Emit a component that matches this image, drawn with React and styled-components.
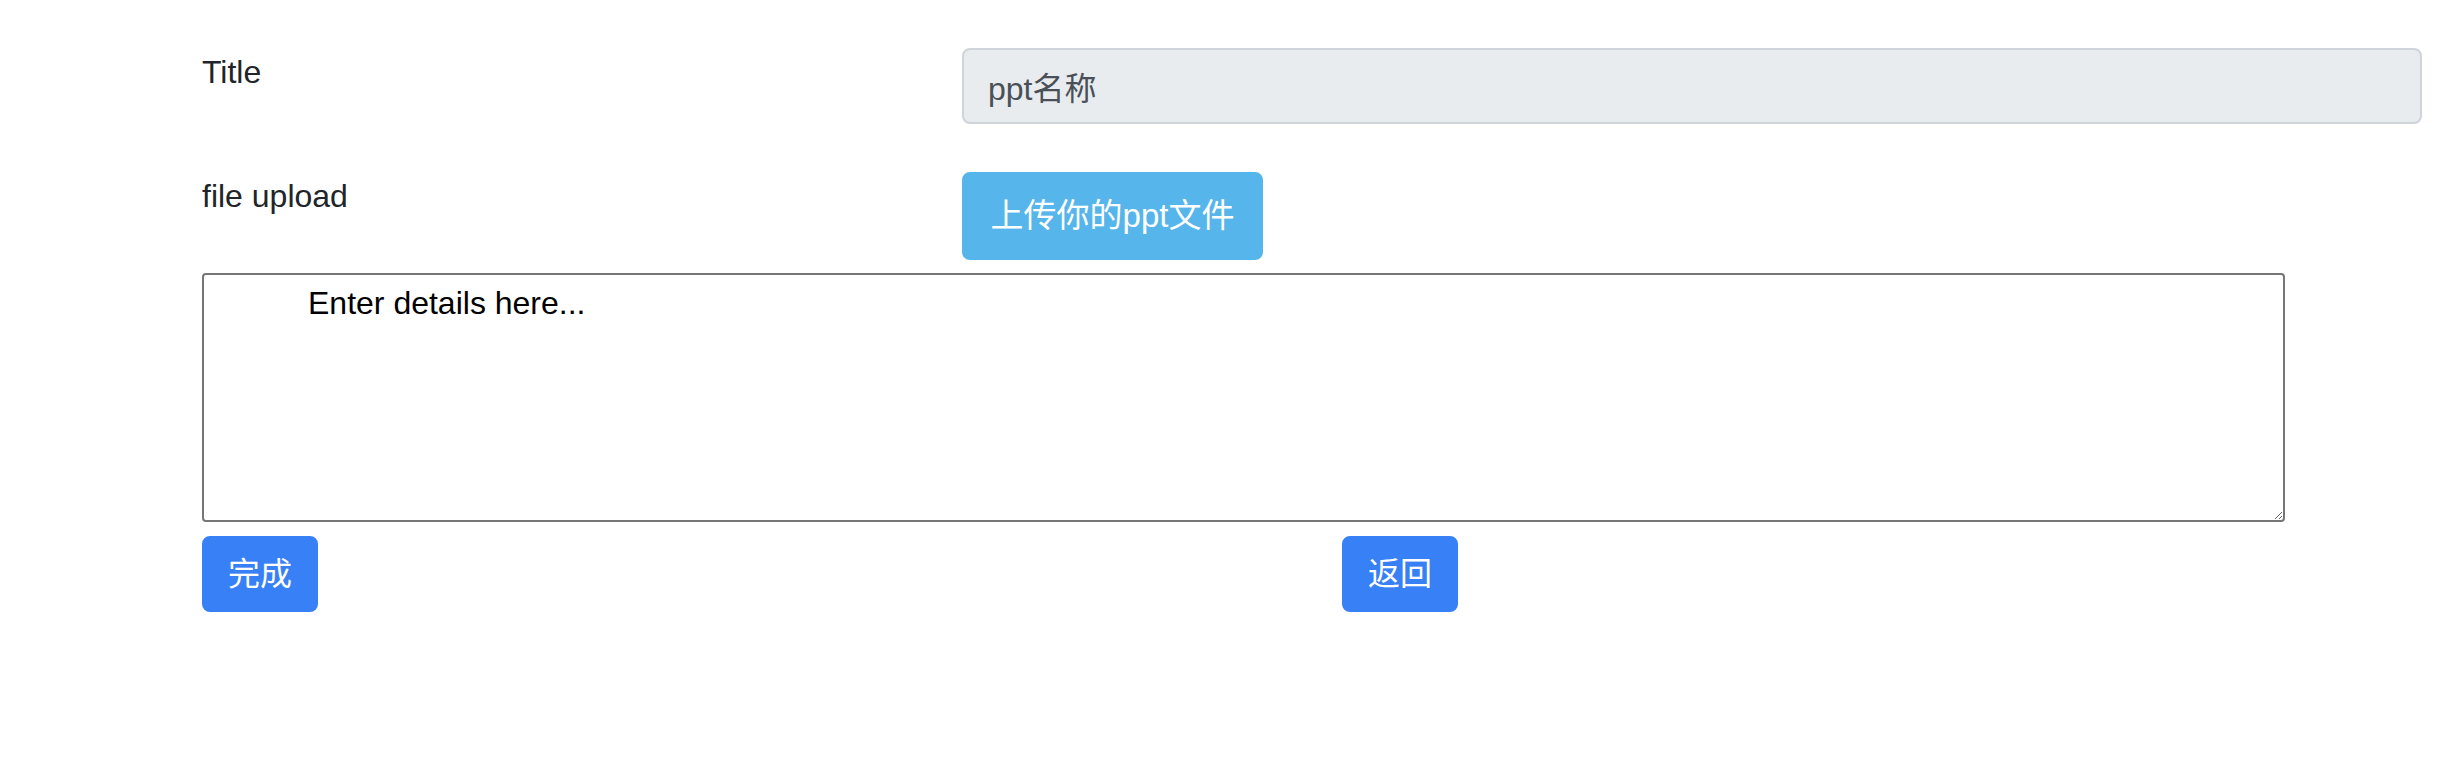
import React from 'react'
import styled, { createGlobalStyle } from 'styled-components'

const GlobalStyle = createGlobalStyle`
  body {
    margin: 0;
    background: #fff;
    font-family: "Liberation Sans", "Noto Sans CJK SC", Arial, sans-serif;
    color: #212529;
  }
`

const App = () => {
  return (
    <>
      <GlobalStyle />
      <Page>
        <FormRow>
          <Label>Title</Label>
          <Field>
            <TitleInput readOnly value="ppt名称" />
          </Field>
        </FormRow>

        <FormRow $tall>
          <Label>file upload</Label>
          <Field>
            <UploadButton type="button">上传你的ppt文件</UploadButton>
          </Field>
        </FormRow>

        <DetailsArea defaultValue="Enter details here..." />

        <ButtonRow>
          <ButtonCell>
            <PrimaryButton type="button">完成</PrimaryButton>
          </ButtonCell>
          <ButtonCell>
            <PrimaryButton type="button">返回</PrimaryButton>
          </ButtonCell>
        </ButtonRow>
      </Page>
    </>
  )
}

const Page = styled.main`
  padding: 48px 0 0 172px;
  width: 2280px;
`

const FormRow = styled.div`
  display: grid;
  grid-template-columns: 760px 1fr;
  margin-bottom: ${(p) => (p.$tall ? '13px' : '48px')};
`

const Label = styled.label`
  padding: 0 30px;
  font-size: 32px;
  line-height: 48px;
`

const Field = styled.div`
  padding: 0 30px;
`

const TitleInput = styled.input`
  box-sizing: border-box;
  display: block;
  width: 100%;
  height: 76px;
  padding: 12px 24px;
  font-family: "Liberation Sans", "Noto Sans CJK SC", sans-serif;
  font-size: 32px;
  line-height: 48px;
  color: #495057;
  background: #e9ecef;
  border: 2px solid #ced4da;
  border-radius: 8px;
  outline: none;
`

const UploadButton = styled.button`
  box-sizing: border-box;
  width: 301px;
  height: 88px;
  padding: 0;
  font-family: "Liberation Sans", "Noto Sans CJK SC", sans-serif;
  font-size: 33px;
  line-height: 54px;
  white-space: nowrap;
  color: #fff;
  background: #56b5ea;
  border: 2px solid #56b5ea;
  border-radius: 8px;
`

const DetailsArea = styled.textarea`
  box-sizing: border-box;
  display: block;
  margin-left: 30px;
  width: 2083px;
  height: 249px;
  padding: 4px;
  text-indent: 100px;
  font-family: "Liberation Sans", "Noto Sans CJK SC", sans-serif;
  font-size: 32px;
  line-height: 48px;
  color: #000;
  border: 2px solid #767676;
  border-radius: 4px;
  outline: none;
`

const ButtonRow = styled.div`
  display: grid;
  grid-template-columns: 1fr 1fr;
  margin-top: 14px;
`

const ButtonCell = styled.div`
  padding: 0 30px;
`

const PrimaryButton = styled.button`
  box-sizing: border-box;
  height: 76px;
  padding: 12px 24px;
  font-family: "Liberation Sans", "Noto Sans CJK SC", sans-serif;
  font-size: 32px;
  line-height: 48px;
  color: #fff;
  background: #3880f6;
  border: 2px solid #3880f6;
  border-radius: 8px;
`

export default App
